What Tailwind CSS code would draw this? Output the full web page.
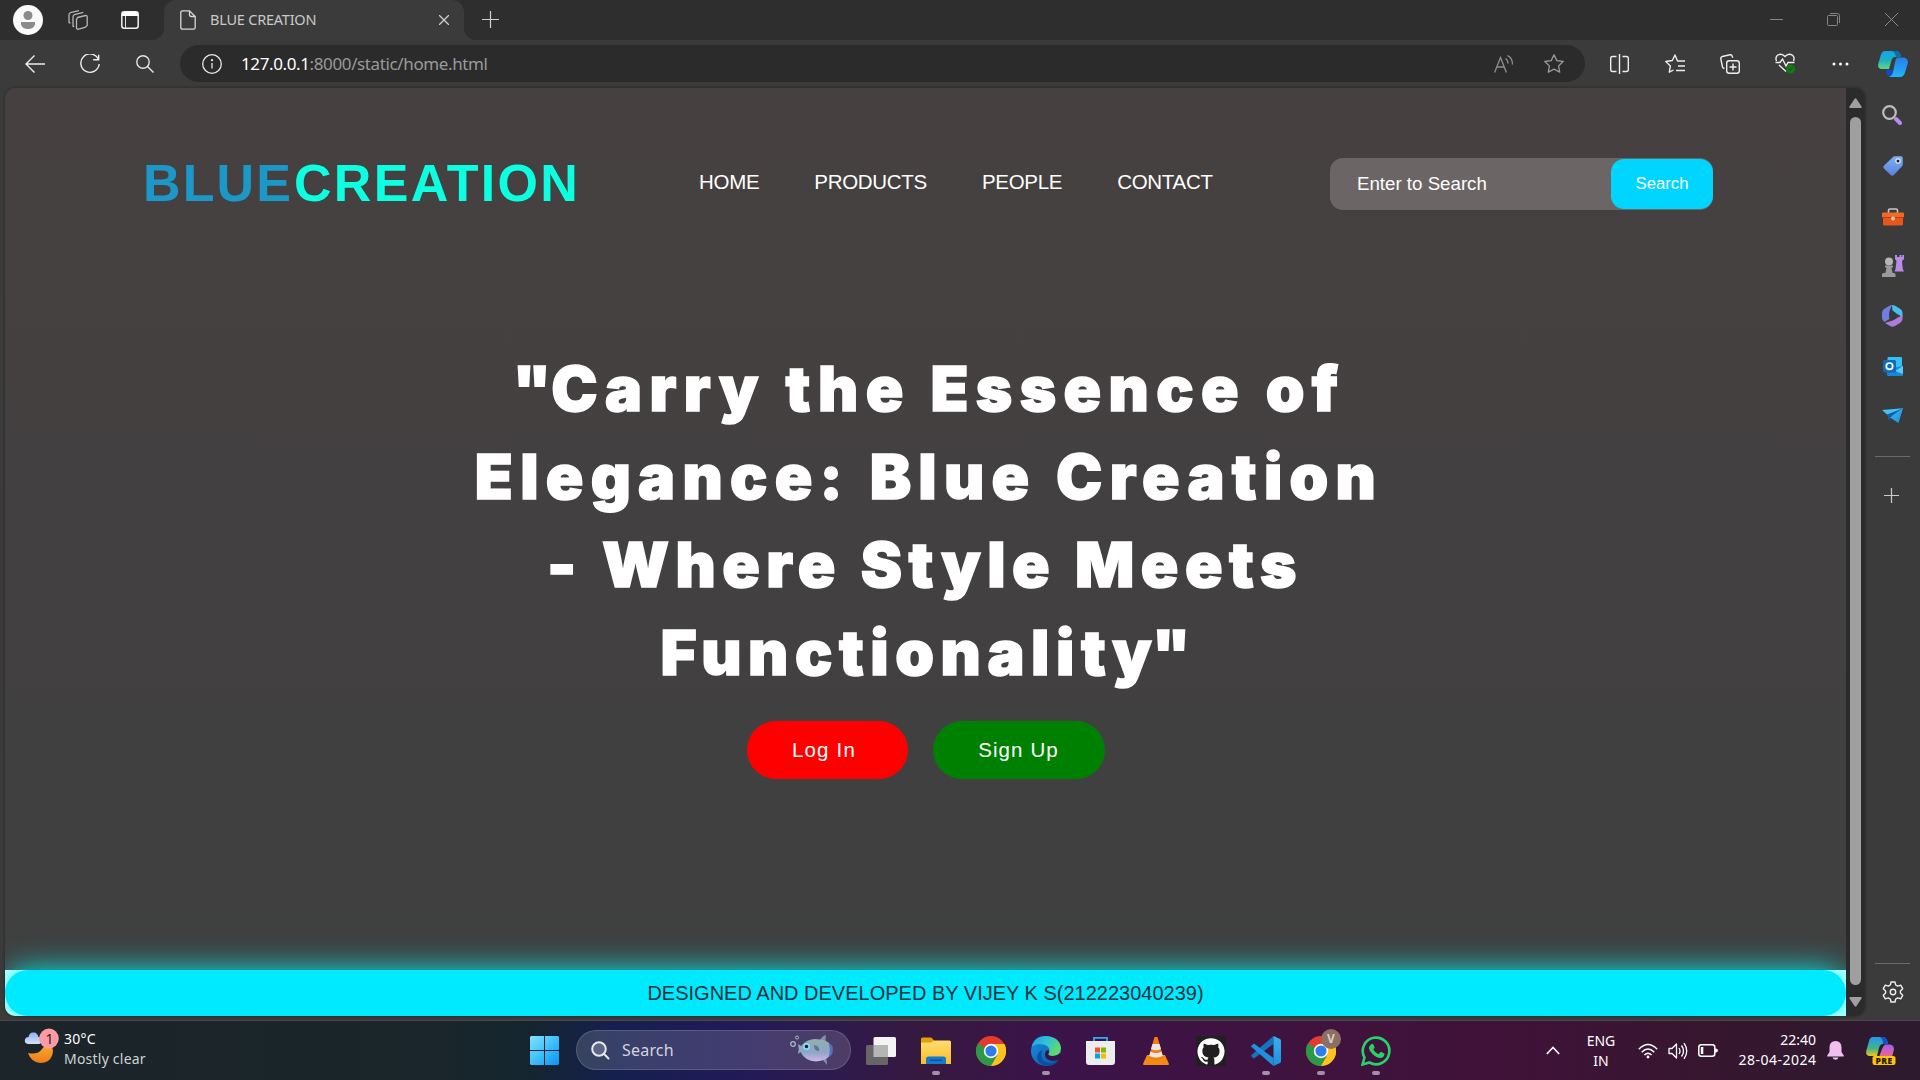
<!DOCTYPE html>
<html lang="en">
<head>
<meta charset="utf-8">
<title>BLUE CREATION</title>
<script src="https://cdn.jsdelivr.net/npm/@tailwindcss/browser@4"></script>
</head>
<body class="w-[1920px] h-[1080px] overflow-hidden flex flex-col bg-[#3b3b3b] font-['Noto_Sans',sans-serif] text-white">

<svg class="absolute w-0 h-0">
  <defs>
    <linearGradient id="cpA" x1="0" y1="0" x2="0" y2="1"><stop offset="0" stop-color="#12a5e8"/><stop offset=".5" stop-color="#1cb0c4"/><stop offset="1" stop-color="#5fd68a"/></linearGradient>
    <linearGradient id="cpB" x1="0" y1="0" x2="0" y2="1"><stop offset="0" stop-color="#2b7be8"/><stop offset="1" stop-color="#1fb6fa"/></linearGradient>
    <linearGradient id="preA" x1="0" y1="0" x2="0" y2="1"><stop offset="0" stop-color="#2497f0"/><stop offset=".6" stop-color="#3fb58a"/><stop offset="1" stop-color="#f0c419"/></linearGradient>
    <linearGradient id="preB" x1="0" y1="0" x2="0" y2="1"><stop offset="0" stop-color="#a45cf0"/><stop offset="1" stop-color="#f0688a"/></linearGradient>
    <linearGradient id="win" gradientUnits="userSpaceOnUse" x1="0" y1="0" x2="29" y2="29"><stop offset="0" stop-color="#85e2ff"/><stop offset=".5" stop-color="#3fc0fb"/><stop offset="1" stop-color="#0a93f5"/></linearGradient>
    <linearGradient id="moon" x1="0" y1="0" x2="0" y2="1"><stop offset="0" stop-color="#f5b82e"/><stop offset="1" stop-color="#ee7a1c"/></linearGradient>
    <linearGradient id="cloud" x1="0" y1="0" x2="0" y2="1"><stop offset="0" stop-color="#8fb0f0"/><stop offset="1" stop-color="#d5e2fb"/></linearGradient>
    <linearGradient id="fold" x1="0" y1="0" x2="0" y2="1"><stop offset="0" stop-color="#ffdd70"/><stop offset="1" stop-color="#fbbd2a"/></linearGradient>
    <linearGradient id="edgeA" x1="0" y1="0" x2="1" y2=".6"><stop offset="0" stop-color="#1d9be8"/><stop offset=".5" stop-color="#2fc3d8"/><stop offset="1" stop-color="#62dc62"/></linearGradient>
    <linearGradient id="edgeB" x1="0" y1="0" x2="1" y2="1"><stop offset="0" stop-color="#1a8ee0"/><stop offset="1" stop-color="#0b56a8"/></linearGradient>
    <linearGradient id="fish" x1="0" y1="0" x2="0" y2="1"><stop offset="0" stop-color="#8fb1a8"/><stop offset=".6" stop-color="#8fa6c8"/><stop offset="1" stop-color="#d4b4ea"/></linearGradient>
    <linearGradient id="tag" x1="0" y1="0" x2="0" y2="1"><stop offset="0" stop-color="#7db0f2"/><stop offset="1" stop-color="#5a80de"/></linearGradient>
    <linearGradient id="vs" x1="0" y1="0" x2="0" y2="1"><stop offset="0" stop-color="#37b1f0"/><stop offset="1" stop-color="#1f8fdd"/></linearGradient>
    <linearGradient id="tele" x1="0" y1="0" x2="1" y2="1"><stop offset="0" stop-color="#3cb6ee"/><stop offset="1" stop-color="#1a93e0"/></linearGradient>
    <symbol id="chrome" viewBox="0 0 30 30">
      <circle cx="15" cy="15" r="15" fill="#e33b2e"/>
      <path d="M2 7.500A15 15 0 0 0 15 30L21.500 18.700 15 15Z" fill="#2b9a48"/>
      <path d="M15 30A15 15 0 0 0 28.500 8H15L21.500 18.700Z" fill="#fcc31e"/>
      <circle cx="15" cy="15" r="7.200" fill="#fff"/><circle cx="15" cy="15" r="5.600" fill="#2f7bea"/>
    </symbol>
  </defs>
</svg>

<!-- tab strip -->
<header class="h-10 shrink-0 bg-[#2e2e2e] flex items-start">
  <div class="w-[164px] h-10 bg-[#3b3b3b] shrink-0">
    <div class="h-10 bg-[#2e2e2e] rounded-br-xl flex items-center">
      <svg class="ml-[13px]" width="30" height="30" viewBox="0 0 30 30"><circle cx="15" cy="15" r="15" fill="#fafafa"/><circle cx="15" cy="10.500" r="4.500" fill="#8a8a8a"/><path d="M8 17h14v1.500c0 3.300-3 5.500-7 5.500s-7-2.200-7-5.500z" fill="#8a8a8a"/></svg>
      <svg class="ml-6" width="21" height="20" viewBox="0 0 21 20" fill="none" stroke="#b5b5b5" stroke-width="1.300"><path d="M10.500 7.500l8-2q1.700-.3 1.700 1.300v8.700l-2.200 2-6.500 1.700q-2 .3-2-1.500V9.500z"/><path d="M7.300 16.700l-1.300-.5V6.800q0-1.500 1.500-2.300L16.300 2.300M3.500 13.200l-1.500-.7V4.700Q2 3.200 3.500 2.500L12 .6"/></svg>
      <svg class="ml-[33px]" width="18" height="18" viewBox="0 0 18 18"><rect x=".8" y=".8" width="16.400" height="16.400" rx="2.500" fill="none" stroke="#f2f2f2" stroke-width="1.500"/><path d="M1 2.500Q1 1 3 1h12q2 0 2 1.500V5H1z" fill="#fff"/><path d="M4.500 5v12" stroke="#ddd"/></svg>
    </div>
  </div>
  <div class="w-[300px] h-10 bg-[#3b3b3b] rounded-t-xl flex items-center pl-4">
    <svg width="16" height="20" viewBox="0 0 16 20" fill="none" stroke="#d8d8d8" stroke-width="1.300"><path d="M2.500.8H9.500L15.200 6.500v11q0 1.700-1.700 1.700h-11Q.8 19.200.8 17.500v-15Q.8.8 2.500.8zM9.500.8v4q0 1.700 1.700 1.700h4"/></svg>
    <span class="ml-[14px] -mt-[2px] w-[229px] text-[14.500px] leading-5 text-[#c9c9c9] whitespace-nowrap tracking-[-0.22px]">BLUE CREATION</span>
    <svg width="10" height="10" viewBox="0 0 10 10" stroke="#cfcfcf" stroke-width="1.300"><path d="M0 0l10 10M10 0L0 10"/></svg>
  </div>
  <div class="w-[18px] h-10 bg-[#3b3b3b]"><div class="h-10 bg-[#2e2e2e] rounded-bl-xl"></div></div>
  <svg class="mt-[11px]" width="17" height="17" viewBox="0 0 17 17" stroke="#d0d0d0" stroke-width="1.200"><path d="M0 8.500h17M8.500 0v17"/></svg>
  <div class="flex-1"></div>
  <svg class="mt-[13px] mr-[44px]" width="13" height="13" viewBox="0 0 13 13" stroke="#858585"><path d="M0 6.500h13"/></svg>
  <svg class="mt-[13px] mr-[45px]" width="13" height="13" viewBox="0 0 13 13" stroke="#858585" fill="none"><rect x=".5" y="2.500" width="10" height="10" rx="1"/><path d="M3 .5h7.500q2 0 2 2V10"/></svg>
  <svg class="mt-[13px] mr-[22px]" width="13" height="13" viewBox="0 0 13 13" stroke="#8a8a8a"><path d="M0 0l13 13M13 0L0 13"/></svg>
</header>

<div class="flex flex-1 min-h-0">
  <div class="w-[1865px] flex flex-col">
    <!-- toolbar -->
    <div class="h-12 shrink-0 flex items-center pb-[1px]">
      <svg class="ml-[25px]" width="20" height="18" viewBox="0 0 20 18" fill="none" stroke="#eee" stroke-width="1.400"><path d="M20 9H1M9.500.5L1 9l8.500 8.500"/></svg>
      <svg class="ml-[35px]" width="20" height="20" viewBox="0 0 20 20" fill="none" stroke="#eee" stroke-width="1.400"><path d="M18.500 5.500A9.200 9.200 0 1 0 19.200 10M18.700.8v5h-5.500"/></svg>
      <svg class="ml-[36px]" width="18" height="18" viewBox="0 0 18 18" fill="none" stroke="#e5e5e5" stroke-width="1.400"><circle cx="7" cy="7" r="6.200"/><path d="M11.500 11.500L17.500 17.500"/></svg>
      <div class="ml-[26px] w-[1405px] h-[37px] rounded-full bg-[#2b2b2b] flex items-center">
        <svg class="ml-[22px]" width="20" height="20" viewBox="0 0 20 20" fill="none" stroke="#e8e8e8" stroke-width="1.300"><circle cx="10" cy="10" r="9.300"/><path d="M10 9v5.500"/><circle cx="10" cy="6.200" r=".5"/></svg>
        <span class="ml-[19px] text-[17px] whitespace-nowrap text-[#9a9a9a] tracking-[-0.38px]"><span class="text-white">127.0.0.1</span>:8000/static/home.html</span>
        <div class="flex-1"></div>
        <svg class="mr-[30px]" width="20" height="18" viewBox="0 0 20 18" fill="none" stroke="#8f8f8f" stroke-width="1.300"><path d="M.6 17.500L6.500 2.500l5.900 15M2.700 12h7.600M11.500 3.500q2.500 1.500 2.500 5M13.500.5q5 2.500 5 9"/></svg>
        <svg class="mr-[21px]" width="20" height="19" viewBox="0 0 20 19" fill="none" stroke="#9a9a9a" stroke-width="1.300" stroke-linejoin="round"><path d="M10 .8l2.800 5.800 6.400.9-4.600 4.400 1.100 6.300L10 15.200l-5.700 3 1.100-6.300L.8 7.500l6.400-.9z"/></svg>
      </div>
      <svg class="ml-[25px]" width="19" height="20" viewBox="0 0 19 20" fill="none" stroke="#eee" stroke-width="1.400"><path d="M6.500 2.500h-4Q.7 2.500.7 4.500v11q0 2 1.800 2h4M12.500 2.500h4q1.800 0 1.800 2v11q0 2-1.800 2h-4M9.500 0v20"/></svg>
      <svg class="ml-[36px]" width="20" height="19" viewBox="0 0 20 19" fill="none" stroke="#eee" stroke-width="1.400" stroke-linejoin="round"><path d="M20 7h-7.500L10 1 7.300 6.500.8 7.500l4.600 4.400-1.100 6.300 4.200-2.200M13 12h7M11 16.500h9"/></svg>
      <svg class="ml-[35px]" width="20" height="20" viewBox="0 0 20 20" fill="none" stroke="#eee" stroke-width="1.400"><rect x="6.700" y="6.700" width="12.600" height="12.600" rx="2.500"/><path d="M13 9.500v7M9.500 13h7M4.500 14.500q-1.500 0-2-1.500L.8 5q-.3-2 1.500-2.500L10 .8q1.800-.3 2.200 1.200l.5 1.700"/></svg>
      <svg class="ml-[35px]" width="21" height="21" viewBox="0 0 21 21"><g fill="none" stroke="#eee" stroke-width="1.400"><path d="M1.500 8Q0 4.500 2.500 2.300 6.500-.5 10 3.500q3.500-4 7.500-1.200Q20 4.500 18.500 8M.5 9.500h4.500L7.500 6l3.500 7 2-3.500h6.500M4 12l7 6.500"/></g><circle cx="15.500" cy="16" r="4.500" fill="#0f7c10"/><path d="M13.500 16l1.500 1.500 2.500-3" stroke="#2b3b2b" fill="none"/></svg>
      <svg class="ml-[36px]" width="17" height="4" viewBox="0 0 17 4" fill="#fff"><circle cx="2" cy="2" r="1.500"/><circle cx="8.500" cy="2" r="1.500"/><circle cx="15" cy="2" r="1.500"/></svg>
    </div>

    <!-- viewport -->
    <div class="h-[928px] ml-[5px] flex rounded-[10px] overflow-hidden shadow-[0_0_3px_#222]">
      <div class="w-[1841px] flex flex-col">
        <main class="h-[882px] bg-linear-to-b from-[#464140] via-[#434041] to-[#3f4040] font-['Liberation_Sans',Arial,sans-serif]">
          <nav class="h-[190px] flex items-center pl-[138px]">
            <h1 class="w-[556px] text-[52px] font-bold leading-none whitespace-nowrap flex"><span class="text-[#1c98c8] w-[151px] tracking-[2.1px]">BLUE</span><span class="text-[#0dffe1] tracking-[2.3px]">CREATION</span></h1>
            <ul class="flex text-[20.500px] w-[631px] gap-[55px] -mt-[1px] whitespace-nowrap tracking-[-0.3px]">
              <li>HOME</li><li>PRODUCTS</li><li>PEOPLE</li><li>CONTACT</li>
            </ul>
            <div class="w-[383px] h-[52px] mt-[2px] rounded-[13px] bg-[#6b6565] flex items-center justify-between pl-[27px]">
              <span class="text-[18.700px] whitespace-nowrap">Enter to Search</span>
              <button class="w-[102px] h-[50px] rounded-[13px] bg-[#00d5ff] text-[16.700px]">Search</button>
            </div>
          </nav>
          <section class="pt-[67px] flex flex-col items-center">
            <h2 class="text-[62px] font-black font-['Inter',sans-serif] leading-[88px] whitespace-nowrap flex flex-col items-center [-webkit-text-stroke:1.5px_white]">
              <span class="tracking-[7.4px] -mr-[7px]"><span class="tracking-normal">"</span>Carry the Essence of</span>
              <span class="tracking-[7.3px] -mr-[7px]">Elegance: Blue Creation</span>
              <span class="tracking-[6.5px] mr-[1px]">- Where Style Meets</span>
              <span class="tracking-[6.6px]">Functionalit<span class="tracking-normal">y"</span></span>
            </h2>
            <div class="flex gap-[25px] mt-[24px] text-[20.500px]">
              <button class="w-[161px] h-[58px] pr-[6px] rounded-full bg-[#ff0000] tracking-[1.2px]">Log In</button>
              <button class="w-[172px] h-[58px] rounded-full bg-[#008000] tracking-[1.1px]">Sign Up</button>
            </div>
          </section>
        </main>
        <footer class="h-[46px] bg-[#c9ffff]">
          <div class="h-[46px] rounded-[24px] bg-[#00eaff] shadow-[0_0_30px_rgba(0,255,255,0.9)] flex items-center justify-center text-[20px] text-[#17303a] font-['Liberation_Sans',Arial,sans-serif]">DESIGNED AND DEVELOPED BY VIJEY K S(212223040239)</div>
        </footer>
      </div>
      <div class="w-[19px] bg-[#2b2b2b] flex flex-col items-center">
        <svg class="mt-[10px]" width="13" height="10" viewBox="0 0 13 10" fill="#9f9f9f"><path d="M5.500 1q1-1.500 2 0l5 7.500Q13 10 11.500 10h-10Q0 10 .5 8.500z"/></svg>
        <div class="mt-[9px] w-[11px] h-[868px] rounded-full bg-[#9f9f9f]"></div>
        <svg class="mt-[12px]" width="13" height="10" viewBox="0 0 13 10" fill="#9f9f9f"><path d="M5.500 9q1 1.500 2 0l5-7.500Q13 0 11.500 0h-10Q0 0 .5 1.500z"/></svg>
      </div>
    </div>
  </div>

  <!-- sidebar -->
  <aside class="w-[55px] flex flex-col items-center">
    <svg class="mt-[10px]" width="30" height="28" viewBox="0 0 30 28"><path d="M7 1h11q4 0 5 6H17q-3 0-4 5l-2 7H3q-4-1-2.500-6L3 4.500Q4 1 7 1z" fill="url(#cpA)"/><path d="M14 1h4q4 0 5 6h-5Q17 2 14 1z" fill="#0a6fa8"/><path d="M8 20h7l-1 4q-1 3-3 3-3-2-3-7z" fill="#1747c8"/><path d="M19 7.500h7q4 1 4 5l-3 10q-1.500 4.500-5 4.500H11q3-1 4-5l2-10q.5-3 2-4.500z" fill="url(#cpB)"/></svg>
    <svg class="mt-[27px] mr-[1px]" width="20" height="20" viewBox="0 0 20 20"><circle cx="7.500" cy="7.500" r="6.300" fill="none" stroke="#bdbdbd" stroke-width="2.200"/><path d="M14 14l4 4" stroke="#b98af0" stroke-width="4" stroke-linecap="round"/></svg>
    <svg class="mt-[31px]" width="20" height="20" viewBox="0 0 20 20"><path d="M9.500 1.500Q10.500.3 12 .3h6q1.800 0 1.800 1.800V8.500q0 1-1 2l-8 8.500q-1.600 1.500-3.200 0L1 12.500Q-.3 11 .9 9.700z" fill="url(#tag)"/><circle cx="15" cy="5" r="2.700" fill="#e5edfa"/><circle cx="15" cy="5" r="1.500" fill="#222"/></svg>
    <svg class="mt-[32px]" width="22" height="18" viewBox="0 0 22 18"><path d="M6.500 5V2.500Q6.500 1 8 1h6q1.500 0 1.500 1.500V5" fill="none" stroke="#c9c9c9" stroke-width="1.600"/><rect x="1" y="6" width="20" height="11.500" rx="1.500" fill="#e8561a"/><rect x="0" y="4.500" width="22" height="5" rx="1" fill="#f06a24"/><path d="M1 9.500h20" stroke="#b8400f"/><circle cx="11" cy="10.500" r="2" fill="#cfc6c2"/></svg>
    <svg class="mt-[29px]" width="22" height="22" viewBox="0 0 22 22"><path d="M13 0h2v2h2.500V0h2v2h.8V0H22v4l-2 2 .8 8 1.200 2.500h-9.500l1-2.500 1-8L13 4z" fill="#b78be8"/><circle cx="7" cy="6.500" r="4" fill="#b5b5b5"/><path d="M3 10.500h8v1.500l-1.500 1 1.200 5h1.500l1.300 1v3H0v-3l1.300-1h2l1.200-5L3 12z" fill="#9a9a9a"/></svg>
    <svg class="mt-[28px]" width="21" height="22" viewBox="0 0 21 22"><path d="M10 0q2 0 3 .8l5 3q2.500 1.500 2.500 4V12l-7-4-3-2.500z" fill="#45c0f0"/><path d="M10 0L7.500 6v8l-5 3Q0 15.500 0 13V8q0-2.500 2-4l5-3Q8.500 0 10 0z" fill="#6f7fe0"/><path d="M20.500 10v4q0 2.500-2.500 4l-5 3q-2.500 1.500-5 0l-5-3 7.500-2.500L20.500 10z" fill="#b07ad8"/><path d="M7.300 7.500l3-2 3.500 2.500v5.500l-3.300 2-3.200-2z" fill="#35383f"/></svg>
    <svg class="mt-[30px]" width="20" height="19" viewBox="0 0 20 19"><rect x="4.500" width="14.500" height="12" rx="1" fill="#34c0f2"/><path d="M4 12l16-3v9q0 1-1 1H5q-1 0-1-1z" fill="#1a86d4"/><path d="M12 14l8-5v8z" fill="#4fd0fa"/><rect y="3" width="13" height="12.500" rx="1.500" fill="#0f6cbd"/><circle cx="6.500" cy="9.200" r="3.200" fill="none" stroke="#fff" stroke-width="1.700"/></svg>
    <svg class="mt-[32px] mr-[1px]" width="21" height="15" viewBox="0 0 21 15"><path d="M0 2L21 .3 13 9 5 6.500z" fill="#45c4f4"/><path d="M5 6.500L21 .3 8 9.500 7.500 14z" fill="#0f5fa8"/><path d="M8 9.500L21 .3 16.500 15z" fill="url(#tele)"/></svg>
    <div class="mt-[33px] w-[35px] h-px bg-[#6b6b6b]"></div>
    <svg class="mt-[31px] mr-[2px]" width="15" height="15" viewBox="0 0 15 15" stroke="#ccc" stroke-width="1.200"><path d="M0 7.500h15M7.500 0v15"/></svg>
    <div class="flex-1"></div>
    <div class="w-[35px] h-px bg-[#6b6b6b]"></div>
    <svg class="mt-[17px] mb-[17px]" width="22" height="22" viewBox="0 0 22 22" fill="none" stroke="#eee" stroke-width="1.400" stroke-linejoin="round"><path d="M9 1h4l.7 3 2 1.200 3-1 2 3.500-2.300 2.200v2.200l2.300 2.200-2 3.500-3-1-2 1.200-.7 3H9l-.7-3-2-1.200-3 1-2-3.500 2.300-2.200V9.900L1.300 7.700l2-3.500 3 1 2-1.200z"/><circle cx="11" cy="11" r="2.700"/></svg>
  </aside>
</div>

<!-- taskbar -->
<footer class="h-[60px] shrink-0 border-t border-[#4a474c] flex items-center bg-[linear-gradient(90deg,#1c2529_0px,#1a262b_440px,#14252f_530px,#15204e_610px,#221a58_740px,#2e1a4c_840px,#36193f_920px,#3b134a_1050px,#3f1340_1250px,#401239_1500px,#371630_1700px,#2c1a2e_1920px)]">
  <div class="w-[530px] shrink-0 flex items-center pl-[24px]">
    <svg class="-mt-[10px]" width="36" height="36" viewBox="0 0 36 36"><path d="M21 13q8 4 8 10-1 12-13 12Q7 34 4 25q10 2 14-4 3-3 3-8z" fill="url(#moon)"/><path d="M4 16q-3.500-.5-3.200-4Q1.500 9 4.500 9 5.500 4 9.500 4.500 13 4 14.500 9q3 0 3.500 3 0 3.500-3 4z" fill="url(#cloud)"/><ellipse cx="25" cy="10.500" rx="9.800" ry="10" fill="#ff99a4"/><text x="21.500" y="15.500" font-size="14" fill="#222" font-family="Noto Sans">1</text></svg>
    <div class="ml-[4px] -mt-[3px] text-[14px] leading-[20px] whitespace-nowrap tracking-[0.22px]"><div>30°C</div><div class="text-[#cfd2d4]">Mostly clear</div></div>
  </div>
  <svg width="29" height="29" viewBox="0 0 29 29" fill="url(#win)"><path d="M1 0h13v14H0V1zM15 0h13l1 1v13H15zM0 15h14v14H1l-1-1zM15 15h14v13l-1 1H15z"/></svg>
  <div class="ml-[17px] w-[275px] h-10 -mt-[1px] rounded-full bg-white/15 border border-white/15 flex items-center pl-[14px] pr-[17px]">
    <svg width="19" height="19" viewBox="0 0 19 19" fill="none" stroke="#e8e8ee" stroke-width="2"><circle cx="8" cy="8" r="6.800" fill="#ffffff30"/><path d="M12.800 12.800L17.500 17.500" stroke-linecap="round"/></svg>
    <span class="ml-[12px] text-[16px] text-[#d3d4e0] tracking-[0.2px]">Search</span>
    <div class="flex-1"></div>
    <svg width="43" height="32" viewBox="0 0 43 32"><path d="M30 6q2-4 6-5-1 4 0 7zM32 25l5 6q0-5-1-7z" fill="#7f8fae"/><path d="M8 10l3 2q6-7 14-7 12 0 16 6 2 5 0 9-4 7-15 7.500Q15 27 10.500 18L8 20q1.500-5 0-10z" fill="url(#fish)"/><path d="M38.500 9q3 1 4 3.500 .8 4-.3 7.500-1.200 2-3.700 3 2.500-6 0-14z" fill="#5572c0"/><circle cx="16.500" cy="12.500" r="3.500" fill="#7fdcf5"/><circle cx="16.500" cy="12.500" r="1.700" fill="#0b1030"/><path d="M24 11q6 1 5 6-5 0-5-6z" fill="#5e7488"/><circle cx="3" cy="10" r="2.300" fill="none" stroke="#aab8c0" stroke-width="1.300"/><circle cx="7" cy="3.500" r="1.500" fill="none" stroke="#aab8c0"/></svg>
  </div>
  <div class="ml-[2px] flex h-[59px]">
    <div class="w-[55px] relative flex items-center justify-center"><svg width="30" height="28" viewBox="0 0 30 28"><rect x="7.500" width="22.500" height="20" rx="1.500" fill="#f4f4f4"/><rect y="8" width="22" height="20" rx="1.500" fill="#666"/><rect x="7.500" y="8" width="14.500" height="12" fill="#b5b5b5"/></svg></div>
    <div class="w-[55px] relative flex items-center justify-center"><svg width="30" height="27" viewBox="0 0 30 27"><path d="M0 2Q0 .5 1.500.5h8q1 0 1.800 1L13 3.500V8H0z" fill="#e3a008"/><path d="M0 5.500h10l3-2h15.500q1.500 0 1.500 1.500V27H0z" fill="url(#fold)"/><path d="M5 27v-5q0-2.500 2.500-2.500h15q2.500 0 2.500 2.500v5z" fill="#1479cf"/><path d="M9 23.200h12" stroke="#0a4f94" stroke-width="1.300"/></svg><i class="absolute bottom-[5px] w-2 h-1 rounded-full bg-[#a390a8]"></i></div>
    <div class="w-[55px] relative flex items-center justify-center"><svg width="30" height="30"><use href="#chrome"/></svg></div>
    <div class="w-[55px] relative flex items-center justify-center"><svg width="30" height="30" viewBox="0 0 30 30"><circle cx="15" cy="15" r="15" fill="url(#edgeB)"/><path d="M.5 11Q3 0 15 0q14 1 15 12-.5 8-8.500 8-6-.5-3.500-3.500Q20 11 13 8.500 5 6.500.5 11z" fill="url(#edgeA)"/><path d="M11 14q-3 13 9 13 5 0 8-4-3 7-12 7-9-1-10-9 1-5 5-7z" fill="#0c4f9e"/><path d="M18 16.500q-2.500 3.500 3.500 3.500 5 0 7.500-3l2 2-3 4.500q-8 3.500-13-1.500-2-3.500 0-7 1.500-1.500 3.200 0z" fill="#3b134a"/></svg><i class="absolute bottom-[5px] w-2 h-1 rounded-full bg-[#a390a8]"></i></div>
    <div class="w-[55px] relative flex items-center justify-center"><svg width="29" height="30" viewBox="0 0 29 30"><path d="M8 6V1.800h13V6" fill="none" stroke="#2cabf0" stroke-width="1.800"/><path d="M0 5h29v21q0 3-3 3H3q-3 0-3-3z" fill="#ededed"/><path d="M9 11.500h5v5H9z" fill="#f25022"/><path d="M15 11.500h5v5h-5z" fill="#7fba00"/><path d="M9 17.500h5v5H9z" fill="#00a4ef"/><path d="M15 17.500h5v5h-5z" fill="#ffb900"/></svg></div>
    <div class="w-[55px] relative flex items-center justify-center"><svg width="26" height="29" viewBox="0 0 26 29"><path d="M4 19h18l4 9q0 1-1 1H1q-1 0-1-1z" fill="#f58a12"/><path d="M11.500 1h3l6 21q-7 4-15 0z" fill="#f27c0c"/><path d="M9.500 8h7l1.500 5q-5 2.500-10 0zM7.500 15.500q5.500 3 11 0l1.300 4.500q-6.800 3-13.600 0z" fill="#e8e8e8"/></svg></div>
    <div class="w-[55px] relative flex items-center justify-center"><svg width="30" height="30" viewBox="0 0 30 30"><rect width="30" height="30" fill="#221f20"/><g transform="translate(1.500 1.800) scale(1.125)"><path fill="#fff" d="M12 .3a12 12 0 0 0-3.800 23.400c.6.100.8-.3.800-.6v-2c-3.300.7-4-1.600-4-1.600-.6-1.400-1.400-1.800-1.400-1.800-1-.7.100-.7.100-.7 1.200 0 1.900 1.200 1.900 1.200 1 1.800 2.800 1.300 3.500 1 0-.8.400-1.300.7-1.600-2.700-.3-5.500-1.300-5.500-6 0-1.200.5-2.300 1.300-3.100-.2-.4-.6-1.600 0-3.200 0 0 1-.3 3.400 1.200a11.500 11.500 0 0 1 6 0c2.300-1.500 3.300-1.200 3.300-1.200.6 1.600.2 2.800 0 3.200.9.800 1.300 1.900 1.300 3.200 0 4.600-2.800 5.600-5.500 5.900.5.400.9 1 .9 2.200v3.300c0 .3.100.7.800.6A12 12 0 0 0 12 .3"/></g></svg></div>
    <div class="w-[55px] relative flex items-center justify-center"><svg width="30" height="30" viewBox="0 0 30 30"><path d="M22.500 0v8L3 22.500.8 20.800q-1.200-1 0-2z" fill="#1374c2"/><path d="M22.500 30v-8L3 7.500.8 9.200q-1.200 1 0 2z" fill="#2090de"/><path d="M22.500 0L29 3q1 .5 1 1.700v20.600q0 1.200-1 1.700l-6.500 3z" fill="url(#vs)"/></svg><i class="absolute bottom-[5px] w-2 h-1 rounded-full bg-[#a390a8]"></i></div>
    <div class="w-[55px] relative flex items-center justify-center"><svg width="30" height="30"><use href="#chrome"/></svg><span class="absolute left-[28px] top-[8px] w-5 h-5 rounded-full bg-[#8d6e63] text-[#d9cfca] text-[12px] font-bold leading-5 text-center">V</span><i class="absolute bottom-[5px] w-2 h-1 rounded-full bg-[#a390a8]"></i></div>
    <div class="w-[55px] relative flex items-center justify-center"><svg width="30" height="30" viewBox="0 0 30 30"><path d="M1.500 28.500l2-7A13.300 13.300 0 1 1 8.500 26.500z" fill="none" stroke="#25d366" stroke-width="2.600"/><path d="M10.500 8q1-.8 1.800.2l1.300 3q0 .8-1.300 2.200 1.800 3.300 5.200 4.800l1.700-2q.5-.5 1.200-.2l2.800 1.400q.5.300.3 1-.8 3.200-4 3.600-4 0-8-4Q7.700 14 7.900 11.500 8.200 9.500 10.500 8z" fill="#25d366"/></svg><i class="absolute bottom-[5px] w-2 h-1 rounded-full bg-[#a390a8]"></i></div>
  </div>
  <div class="flex-1"></div>
  <svg width="14" height="9" viewBox="0 0 14 9" fill="none" stroke="#fff" stroke-width="1.600"><path d="M.8 8L7 1.500 13.200 8"/></svg>
  <div class="ml-[22px] w-[38px] text-center text-[14px] leading-[20px] whitespace-nowrap"><div>ENG</div><div>IN</div></div>
  <svg class="ml-[18px]" width="20" height="16" viewBox="0 0 20 16" fill="none" stroke="#fff" stroke-width="1.400"><path d="M.8 6.200q9.200-9.500 18.400 0M3.700 9.200q6.300-6.500 12.600 0M6.400 12q3.600-3.500 7.200 0"/><circle cx="10" cy="14" r="1.400" fill="#fff" stroke="none"/></svg>
  <svg class="ml-[10px]" width="20" height="18" viewBox="0 0 20 18" fill="none" stroke="#fff" stroke-width="1.300" stroke-linejoin="round"><path d="M1 6.500h3L8.500 2v14L4 11.500H1zM11 6q2 3 0 6M13.500 3.500q4 5.500 0 11M16 1.200q5.500 7.800 0 15.600"/></svg>
  <svg class="ml-[10px]" width="20" height="13" viewBox="0 0 20 13"><rect x=".8" y=".8" width="16" height="11.400" rx="2.500" fill="none" stroke="#fff" stroke-width="1.500"/><rect x="2.800" y="3" width="2.500" height="7" fill="#fff"/><path d="M17 4.500q3-.2 3 2t-3 2z" fill="#fff"/></svg>
  <div class="w-[98px] text-right text-[14px] leading-[20px] whitespace-nowrap -mt-[2px]"><div>22:40</div><div class="tracking-[0.5px] -mr-[0.5px]">28-04-2024</div></div>
  <svg class="ml-[11px]" width="17" height="19" viewBox="0 0 17 19" fill="#f0bff0"><path d="M8.500 0q6 .3 6 6.500V11l2.300 3.500V15.500H.2v-1L2.500 11V6.500q0-6.200 6-6.500zM5.500 16.500h6q-.8 2.300-3 2.300t-3-2.300z"/></svg>
  <svg class="ml-[22px] mr-[24px]" width="30" height="28" viewBox="0 0 30 28"><path d="M7 0h10q4 0 5 7h-5q-3 0-4 4l-2 8H3q-4-1-2.500-6L3 4Q4 0 7 0z" fill="url(#preA)"/><path d="M14 0h3q4 0 5 7h-5Q17 2 14 0z" fill="#1450c8"/><path d="M19 7.500h5q4 .5 4 5L26 20H13l3-8q1-3 3-4.500z" fill="url(#preB)"/><rect x="6.500" y="19" width="23" height="9" rx="2" fill="#ffc20a"/><text x="18" y="26.500" text-anchor="middle" font-size="8.500" font-weight="900" fill="#221c00" font-family="Noto Sans" letter-spacing=".4">PRE</text></svg>
</footer>
</body>
</html>
